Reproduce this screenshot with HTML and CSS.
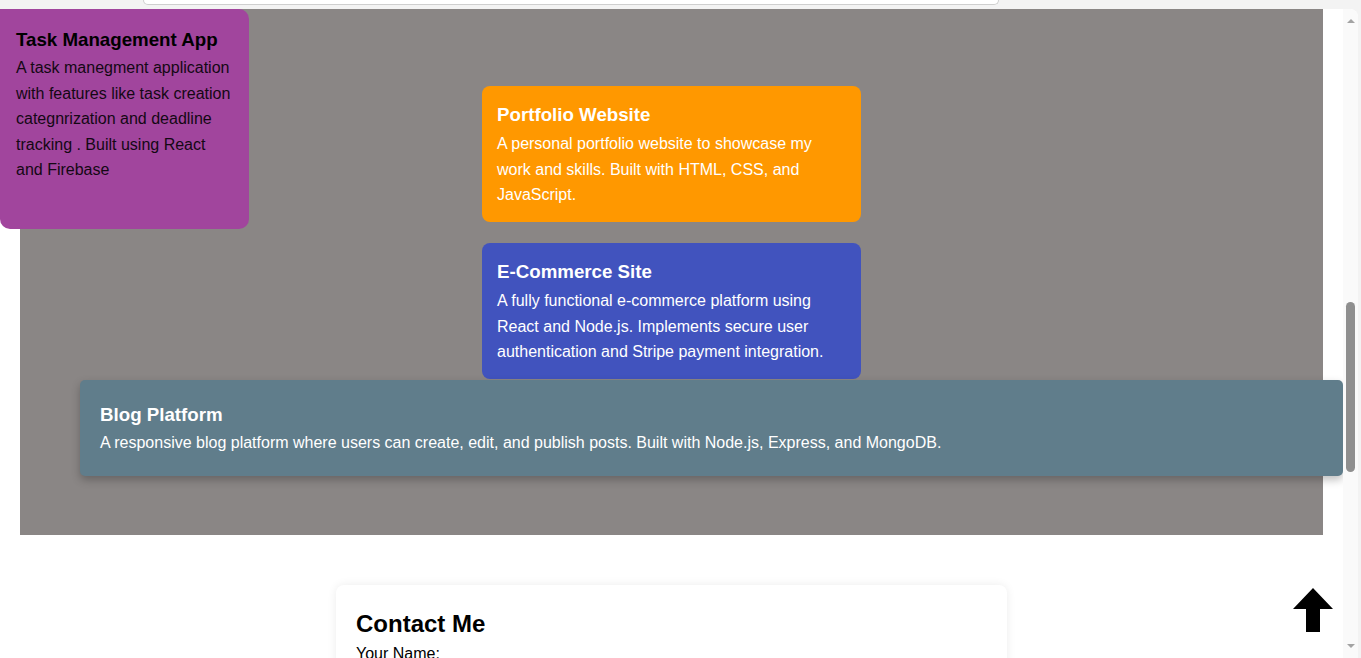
FILE: index.html
```html
<!DOCTYPE html>
<html lang="en">
<head>
<meta charset="utf-8">
<title>Projects</title>
<link rel="stylesheet" href="styles.css">
</head>
<body>
  <div class="chrome">
    <div class="urlbar"></div>
  </div>
  <div class="window">
    <div class="viewport">
      <section class="projects">
        <div class="project-list">
          <article class="card card-orange">
            <h3>Portfolio Website</h3>
            <p>A personal portfolio website to showcase my work and skills. Built with HTML, CSS, and JavaScript.</p>
          </article>
          <article class="card card-blue">
            <h3>E-Commerce Site</h3>
            <p>A fully functional e-commerce platform using React and Node.js. Implements secure user authentication and Stripe payment integration.</p>
          </article>
          <article class="card card-wide">
            <h3>Blog Platform</h3>
            <p>A responsive blog platform where users can create, edit, and publish posts. Built with Node.js, Express, and MongoDB.</p>
          </article>
        </div>
        <article class="card card-purple">
          <h3>Task Management App</h3>
          <p>A task manegment application with features like task creation categnrization and deadline tracking . Built using React and Firebase</p>
        </article>
      </section>

      <section class="contact">
        <h2>Contact Me</h2>
        <label class="field-label">Your Name:</label>
      </section>

      <a class="to-top" href="#" aria-label="Back to top">
        <svg width="40" height="44" viewBox="0 0 40 44"><polygon points="20,0 40,21 27,21 27,44 13,44 13,21 0,21" fill="#000"/></svg>
      </a>
    </div>
    <div class="scrollbar">
      <span class="sb-arrow sb-up"></span>
      <span class="sb-thumb"></span>
      <span class="sb-arrow sb-down"></span>
    </div>
  </div>
</body>
</html>
```

FILE: styles.css
```css
* { box-sizing: border-box; }

html, body {
  margin: 0;
  height: 658px;
  overflow: hidden;
}

body {
  background: #f3f3f3;
  font-family: "Liberation Sans", Arial, sans-serif;
  color: #000;
}

.chrome {
  height: 9px;
  padding-left: 143px;
}

.urlbar {
  width: 856px;
  height: 5px;
  background: #fff;
  border: 1px solid #cfcfcf;
  border-top: none;
  border-radius: 0 0 10px 10px;
}

.window {
  display: flex;
  width: 1358px;
  height: 649px;
  background: #fff;
  border-top-right-radius: 8px;
  overflow: hidden;
}

.viewport {
  flex: 1;
  position: relative;
  overflow: hidden;
}

.projects {
  position: relative;
  margin: 0 20px;
  height: 526px;
  background: #8a8685;
}

.project-list {
  display: flex;
  flex-direction: column;
  align-items: center;
  padding-top: 77px;
}

.card {
  border-radius: 8px;
  color: #fff;
}

.card h3 {
  margin: 2px 0 5px;
  font-size: 18.72px;
  font-weight: bold;
  line-height: normal;
}

.card p {
  margin: 0;
  font-size: 16px;
  line-height: 25.6px;
}

.card-orange,
.card-blue {
  width: 379px;
  height: 136px;
  padding: 16px 15px 0;
}

.card-orange { background: #ff9800; margin-bottom: 21px; }
.card-blue { background: #4153be; }

.card-wide {
  align-self: stretch;
  margin: 1px -20px 0 60px;
  padding: 20px 20px 20px;
  border-radius: 5px;
  background: #607d8b;
  box-shadow: 0 4px 8px rgba(0, 0, 0, 0.25);
}

.card-wide h3 { margin: 4px 0 4px; }

.card-purple {
  position: absolute;
  left: -20px;
  top: 0;
  width: 249px;
  height: 220px;
  padding: 16px;
  border-radius: 0 10px 10px 10px;
  background: #a1459d;
  color: #000;
}

.card-purple h3 { margin: 4px 0 4px; }
.card-purple p { color: #140814; }

.contact {
  width: 671px;
  margin: 50px auto 0;
  padding: 20px;
  background: #fff;
  border-radius: 8px;
  box-shadow: 0 0 10px rgba(0, 0, 0, 0.08);
}

.contact h2 {
  margin: 5px 0 7px;
  font-size: 24px;
  font-weight: bold;
  line-height: normal;
}

.field-label {
  display: block;
  font-size: 16px;
}

.to-top {
  position: fixed;
  left: 1293px;
  top: 588px;
  display: block;
  width: 40px;
  height: 44px;
}

.to-top svg { display: block; }

.scrollbar {
  position: relative;
  width: 15px;
  background: #fafafa;
  display: flex;
  flex-direction: column;
  align-items: center;
}

.sb-arrow {
  width: 0;
  height: 0;
  border-left: 4px solid transparent;
  border-right: 4px solid transparent;
}

.sb-up {
  margin-top: 10px;
  border-bottom: 4px solid #a3a3a3;
}

.sb-thumb {
  width: 9px;
  height: 170px;
  margin-top: 279px;
  border-radius: 5px;
  background: #8f8f8f;
}

.sb-down {
  margin-top: auto;
  margin-bottom: 10px;
  border-top: 4px solid #a3a3a3;
}
```
